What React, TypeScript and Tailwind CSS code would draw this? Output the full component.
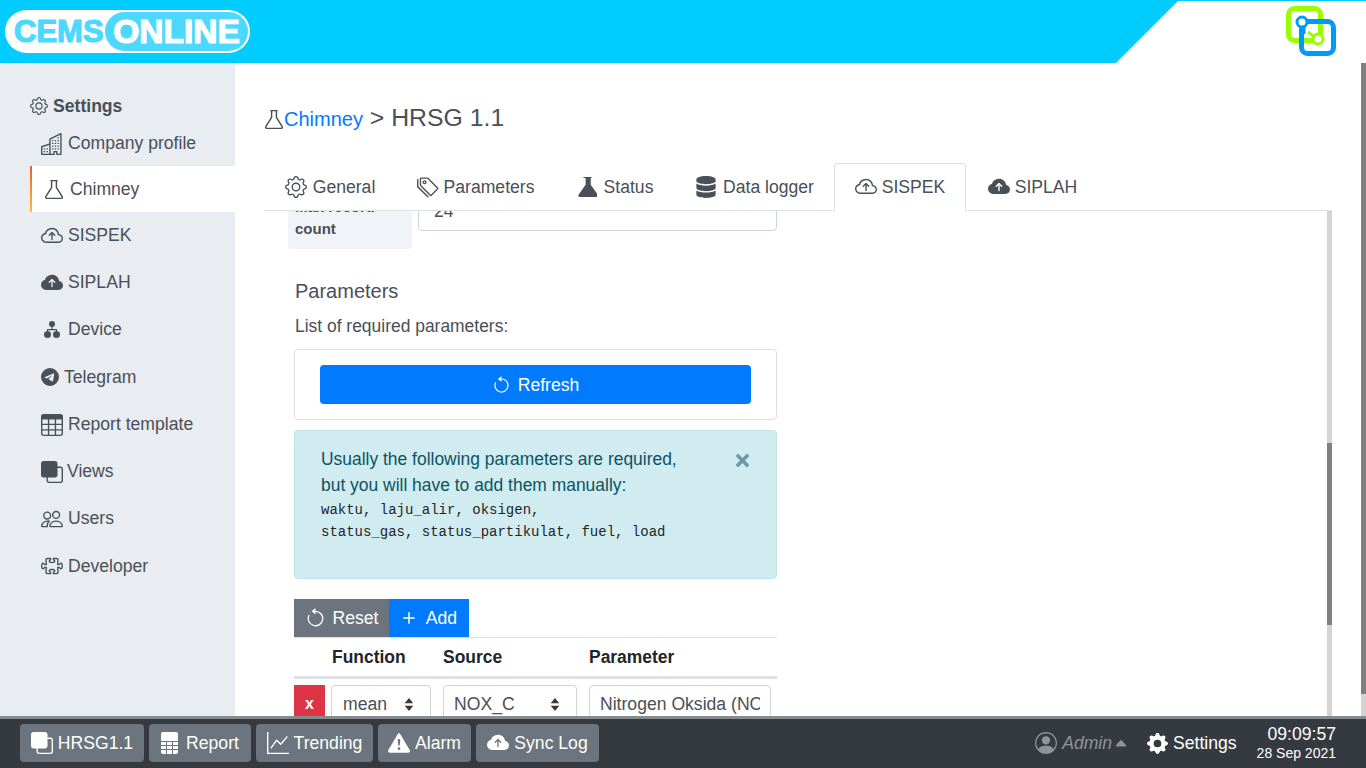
import React from "react";
import {
  BsGear, BsBuildings, BsCloudArrowUp, BsCloudArrowUpFill, BsTelegram, BsTable, BsFront,
  BsPeople, BsPuzzle, BsTags, BsArrowCounterclockwise, BsPlus, BsGraphUp, BsExclamationTriangleFill,
  BsGearFill, BsPersonCircle, BsCaretUpFill,
} from "react-icons/bs";
import { FaDatabase, FaTimes } from "react-icons/fa";

const Flask = ({ className = "" }: { className?: string }) => (
  <svg viewBox="0.5 0.4 15 17" preserveAspectRatio="none" className={className} fill="none" stroke="currentColor" strokeWidth="1.2" strokeLinejoin="round">
    <path d="M5 1h6M6 1v6L1.2 15.3a1 1 0 0 0 .9 1.5h11.8a1 1 0 0 0 .9-1.5L10 7V1" />
  </svg>
);
const FlaskFill = ({ className = "" }: { className?: string }) => (
  <svg viewBox="1 0 14 18" preserveAspectRatio="none" className={className} fill="currentColor">
    <path d="M5 0h6v1h-.6v6l5.2 9a1.3 1.3 0 0 1-1.1 2H2.5a1.3 1.3 0 0 1-1.1-2l5.2-9V1H5z" />
  </svg>
);
const DeviceIcon = ({ className = "" }: { className?: string }) => (
  <svg viewBox="0 0 16 17" className={className} fill="currentColor">
    <circle cx="8" cy="3" r="3" />
    <path d="M7.4 5h1.2v3H13v2h-1V9.2H4V10H3V8h4.4z" />
    <circle cx="3.5" cy="13.5" r="3.5" />
    <circle cx="12.5" cy="13.5" r="3.5" />
  </svg>
);
const CalcIcon = ({ className = "" }: { className?: string }) => (
  <svg viewBox="0 0 17 22" className={className} fill="currentColor">
    <path d="M2 0h13a2 2 0 0 1 2 2v7H0V2a2 2 0 0 1 2-2z" />
    <path d="M0 10h5v3H0zM6 10h5v3H6zM12 10h5v3h-5zM0 14h5v3H0zM6 14h5v3H6zM12 14h5v3h-5zM0 18h5v4H2a2 2 0 0 1-2-2zM6 18h5v4H6zM12 18h5v2a2 2 0 0 1-2 2h-3z" />
  </svg>
);
const SortArrows = () => (
  <svg viewBox="0 0 10 14" className="w-[10px] h-[13px]" fill="#343a40"><path d="M5 0l4.6 5.6H.4zM5 14L.4 8.4h9.2z" /></svg>
);

const side = [
  { t: "Company profile", i: <BsBuildings className="w-[22px] h-[22px]" />, gap: "gap-[5px]", h: "h-[47px] pt-[2px]" },
  { t: "Chimney", i: <Flask className="w-[18px] h-[19px]" />, gap: "gap-[7px]", active: true, h: "h-[46px]" },
  { t: "SISPEK", i: <BsCloudArrowUp className="w-[22px] h-[22px]" />, gap: "gap-[5px]", h: "h-[47px]" },
  { t: "SIPLAH", i: <BsCloudArrowUpFill className="w-[22px] h-[22px]" />, gap: "gap-[5px]", h: "h-[47px]" },
  { t: "Device", i: <DeviceIcon className="w-[16px] h-[17px] mx-[3px]" />, gap: "gap-[5px]", h: "h-[47px]" },
  { t: "Telegram", i: <BsTelegram className="w-[18px] h-[18px]" />, gap: "gap-[5px]", h: "h-[48px]" },
  { t: "Report template", i: <BsTable className="w-[22px] h-[22px]" />, gap: "gap-[5px]", h: "h-[47px]" },
  { t: "Views", i: <BsFront className="w-[22px] h-[22px]" />, gap: "gap-[4px]", h: "h-[47px]" },
  { t: "Users", i: <BsPeople className="w-[22px] h-[22px]" />, gap: "gap-[5px]", h: "h-[47px]" },
  { t: "Developer", i: <BsPuzzle className="w-[22px] h-[22px]" />, gap: "gap-[5px]", h: "h-[48px]" },
];

const tabs = [
  { t: "General", i: <BsGear className="w-[22px] h-[22px]" />, w: "w-[132px]", gap: "gap-[6px]" },
  { t: "Parameters", i: <BsTags className="w-[22px] h-[22px]" />, w: "w-[159px]", gap: "gap-[5px]" },
  { t: "Status", i: <FlaskFill className="w-[19px] h-[20px]" />, w: "w-[121px]", gap: "gap-[7px]" },
  { t: "Data logger", i: <FaDatabase className="w-[20px] h-[22px]" />, w: "w-[158px]", gap: "gap-[7px]" },
  { t: "SISPEK", i: <BsCloudArrowUp className="w-[22px] h-[22px]" />, w: "w-[132px]", active: true, gap: "gap-[5px]" },
  { t: "SIPLAH", i: <BsCloudArrowUpFill className="w-[22px] h-[22px]" />, w: "w-[133px]", gap: "gap-[5px]" },
];

const dock = [
  { t: "HRSG1.1", i: <BsFront className="w-[22px] h-[22px]" />, w: "w-[124px]", gap: "gap-[5px]" },
  { t: "Report", i: <CalcIcon className="w-[17px] h-[22px]" />, w: "w-[102px]", gap: "gap-[8px]" },
  { t: "Trending", i: <BsGraphUp className="w-[22px] h-[22px]" />, w: "w-[117px]", gap: "gap-[5px]" },
  { t: "Alarm", i: <BsExclamationTriangleFill className="w-[22px] h-[22px]" />, w: "w-[93px]", gap: "gap-[5px]" },
  { t: "Sync Log", i: <BsCloudArrowUpFill className="w-[22px] h-[22px]" />, w: "w-[123px]", gap: "gap-[5px]" },
];

export default function App() {
  return (
    <div className="h-[768px] w-[1366px] overflow-hidden flex flex-col bg-white text-[#495057] text-[17.6px] font-['Liberation_Sans',Arial,sans-serif]">
      {/* Header */}
      <header className="h-[63px] shrink-0 bg-[#00ccff] flex relative">
        <div className="ml-[5px] mt-[10px] w-[245px] h-[43px] bg-white rounded-full flex items-center relative">
          <span className="ml-[9px] text-[#4dd9ff] font-bold text-[31px] leading-none [-webkit-text-stroke:1.2px_#4dd9ff] whitespace-nowrap">CEMS</span>
          <div className="absolute left-[100px] top-[2px] w-[143px] h-[39px] rounded-full bg-[#4dd9ff] flex items-center justify-center">
            <span className="text-white font-bold text-[33.5px] leading-none [-webkit-text-stroke:1.2px_#ffffff] whitespace-nowrap">ONLINE</span>
          </div>
        </div>
        <svg viewBox="0 0 250 63" className="absolute right-0 top-0 w-[250px] h-[63px]" preserveAspectRatio="none">
          <path d="M62 1H250V63H0z" fill="#ffffff" />
        </svg>
        <svg viewBox="0 0 50 50" className="absolute left-[1286px] top-[6px] w-[50px] h-[50px]">
          <rect x="2.5" y="2.5" width="32" height="32" rx="6" fill="none" stroke="#99ff00" strokeWidth="5" />
          <path d="M22 26l8 6" stroke="#99ff00" strokeWidth="3" />
          <rect x="15.5" y="15.5" width="32" height="32" rx="6" fill="none" stroke="#0099ff" strokeWidth="5" />
          <path d="M18 20v8" stroke="#0099ff" strokeWidth="3" />
          <circle cx="16" cy="16" r="5" fill="#ffffff" stroke="#0099ff" strokeWidth="3" />
          <circle cx="32" cy="33" r="5" fill="#ffffff" stroke="#99ff00" strokeWidth="3" />
        </svg>
      </header>

      <div className="flex-1 flex min-h-0 relative">
        {/* Sidebar */}
        <aside className="w-[235px] shrink-0 bg-[#e9ecf1] pt-[31px] pl-[30px]">
          <div className="flex items-center gap-[5px] h-[24px] font-bold">
            <BsGear className="w-[18px] h-[18px]" />
            <span>Settings</span>
          </div>
          <div className="mt-[1px]">
            {side.map((s) => (
              <div
                key={s.t}
                className={`flex items-center ${s.gap} ${s.h} ${s.active ? "bg-white pl-[13px] border-l-[2px] [border-image:linear-gradient(#f4572e,#fbc02d)_1]" : "pl-[11px]"}`}
              >
                {s.i}
                <span>{s.t}</span>
              </div>
            ))}
          </div>
        </aside>

        {/* Main */}
        <main className="flex-1 min-w-0 pl-[29px] flex flex-col">
          <div className="h-[100px] shrink-0 flex items-start pt-[40px]">
            <Flask className="w-[18px] h-[19px] mt-[7px] mr-[2px] ml-[1px]" />
            <h1 className="text-[24.8px] leading-[30px] -ml-px">
              <span className="text-[20px] text-[#007bff]">Chimney</span> &gt; HRSG 1.1
            </h1>
          </div>
          <nav className="h-[48px] shrink-0 w-[1068px] border-b border-[#dee2e6] flex">
            {tabs.map((t) => (
              <div
                key={t.t}
                className={`${t.w} shrink-0 h-[48px] flex items-center justify-center ${t.gap} rounded-t-[4px] ${t.active ? "bg-white border border-[#dee2e6] border-b-white" : ""}`}
              >
                {t.i}
                <span>{t.t}</span>
              </div>
            ))}
          </nav>
          <div className="flex-1 min-h-0 overflow-hidden w-[1068px] flex relative">
            <div className="w-[1063px] pl-[24px]">
              <div className="w-[489px] -mt-[38px]">
                <div className="flex gap-[6px] items-start">
                  <div className="w-[124px] h-[76px] bg-[#f0f3f8] rounded-[4px] px-[7px] pt-[23px] font-bold text-[15px] leading-[22px]">
                    Max record count
                  </div>
                  <div className="mt-[20px] w-[359px] h-[38px] border border-[#ced4da] rounded-[4px] flex items-center px-[15px] pb-[2px] text-[#495057]">24</div>
                </div>
                <div className="pl-[6px]">
                  <h5 className="mt-[30px] ml-px text-[20px] leading-[24px]">Parameters</h5>
                  <p className="mt-[11px] ml-px text-[17.45px] leading-[24px] whitespace-nowrap">List of required parameters:</p>
                  <div className="mt-[11px] h-[71px] border border-[#dfdfdf] rounded-[4px] px-[25px] pt-[15px]">
                    <div className="h-[39px] pt-px bg-[#007bff] rounded-[4px] text-white flex items-center justify-center gap-[7px]">
                      <BsArrowCounterclockwise className="w-[19px] h-[19px]" />
                      <span>Refresh</span>
                    </div>
                  </div>
                  <div className="mt-[10px] h-[149px] bg-[#d1ecf1] border border-[#bee5eb] rounded-[4px] pl-[26px] pt-[15px] pr-[26px] text-[#0c5460] relative">
                    <p className="leading-[26px] text-[17.45px] whitespace-nowrap">Usually the following parameters are required,<br />but you will have to add them manually:</p>
                    <p className="font-['Liberation_Mono',monospace] text-[14px] leading-[22px] text-[#212529] mt-[1px]">waktu, laju_alir, oksigen,<br />status_gas, status_partikulat, fuel, load</p>
                    <FaTimes className="absolute top-[20px] right-[25px] w-[17px] h-[19px] text-[#6f9aa3]" />
                  </div>
                  <div className="mt-[20px] flex h-[38px]">
                    <div className="w-[95px] bg-[#6c757d] text-white flex items-center justify-center gap-[7px]">
                      <BsArrowCounterclockwise className="w-[21px] h-[21px]" />
                      <span>Reset</span>
                    </div>
                    <div className="w-[80px] bg-[#007bff] text-white flex items-center justify-center gap-[5px] pr-[4px]">
                      <BsPlus className="w-[24px] h-[24px]" />
                      <span>Add</span>
                    </div>
                  </div>
                  <div className="border-t border-[#dee2e6] h-[42px] border-b-[3px] border-b-[#dee2e6] flex items-center font-bold text-[#212529] text-[17.45px]">
                    <span className="ml-[38px] w-[111px]">Function</span>
                    <span className="w-[146px]">Source</span>
                    <span>Parameter</span>
                  </div>
                  <div className="mt-[6px] flex items-start">
                    <div className="w-[31px] h-[38px] bg-[#dc3545] text-white font-bold text-[16px] flex items-center justify-center">x</div>
                    <div className="ml-[6px] w-[100px] h-[38px] border border-[#ced4da] rounded-[4px] flex items-center justify-between pl-[11px] pr-[16px]">
                      <span>mean</span><SortArrows />
                    </div>
                    <div className="ml-[12px] w-[134px] h-[38px] border border-[#ced4da] rounded-[4px] flex items-center justify-between pl-[10px] pr-[16px]">
                      <span>NOX_C</span><SortArrows />
                    </div>
                    <div className="ml-[12px] w-[182px] h-[38px] border border-[#ced4da] rounded-[4px] flex items-center pl-[10px] pr-[10px] overflow-hidden whitespace-nowrap">
                      <span className="block overflow-hidden">Nitrogen Oksida (NOx)</span>
                    </div>
                  </div>
                </div>
              </div>
            </div>
            <div className="w-[5px] shrink-0 bg-[#d4d4d4] relative">
              <div className="absolute left-0 top-[232px] w-[5px] h-[182px] bg-[#808080]" />
            </div>
          </div>
        </main>

        {/* Page scrollbar */}
        <div className="w-[5px] shrink-0 flex flex-col ml-[29px]">
          <div className="h-[631px] bg-[#808080]" />
          <div className="flex-1 bg-[#d4d4d4]" />
        </div>
      </div>

      {/* Dock */}
      <footer className="h-[52px] shrink-0 bg-[#343a40] border-t-[3px] border-[#868b90] flex items-center pl-[20px] pr-[30px] pb-[1px] text-white">
        <div className="flex gap-[5px]">
          {dock.map((d) => (
            <div key={d.t} className={`${d.w} h-[38px] rounded-[4px] bg-[#6c757d] flex items-center justify-center ${d.gap} whitespace-nowrap`}>
              {d.i}
              <span className="text-[17.6px]">{d.t}</span>
            </div>
          ))}
        </div>
        <div className="ml-auto flex items-center">
          <BsPersonCircle className="w-[22px] h-[22px] text-[#8f9499]" />
          <span className="ml-[5px] italic text-[#8f9499]">Admin</span>
          <BsCaretUpFill className="ml-[1px] w-[16px] h-[14px] text-[#8f9499]" />
          <BsGearFill className="ml-[18px] w-[21px] h-[21px]" />
          <span className="ml-[5px]">Settings</span>
          <div className="ml-[20px] flex flex-col items-end">
            <span className="text-[17.6px] leading-[20px]">09:09:57</span>
            <span className="text-[14px] leading-[18px]">28 Sep 2021</span>
          </div>
        </div>
      </footer>
    </div>
  );
}
